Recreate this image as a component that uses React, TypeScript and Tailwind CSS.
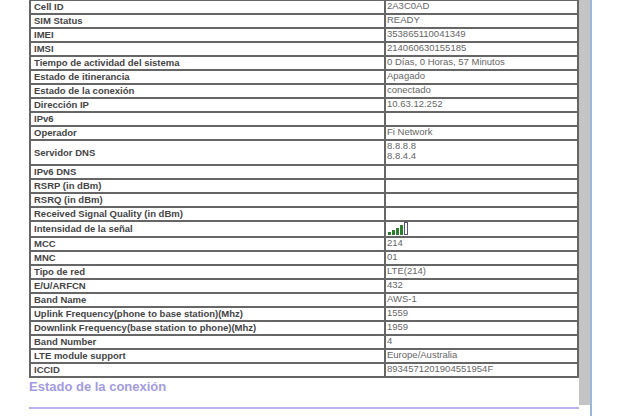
const rows: [string, string | string[], number?][] = [
  ["Cell ID", "2A3C0AD"],
  ["SIM Status", "READY"],
  ["IMEI", "353865110041349"],
  ["IMSI", "214060630155185"],
  ["Tiempo de actividad del sistema", "0 Días, 0 Horas, 57 Minutos"],
  ["Estado de itinerancia", "Apagado"],
  ["Estado de la conexión", "conectado"],
  ["Dirección IP", "10.63.12.252"],
  ["IPv6", ""],
  ["Operador", "Fi Network"],
  ["Servidor DNS", ["8.8.8.8", "8.8.4.4"]],
  ["IPv6 DNS", ""],
  ["RSRP (in dBm)", ""],
  ["RSRQ (in dBm)", ""],
  ["Received Signal Quality (in dBm)", ""],
  ["Intensidad de la señal", "SIGNAL"],
  ["MCC", "214"],
  ["MNC", "01"],
  ["Tipo de red", "LTE(214)"],
  ["E/U/ARFCN", "432"],
  ["Band Name", "AWS-1"],
  ["Uplink Frequency(phone to base station)(Mhz)", "1559"],
  ["Downlink Frequency(base station to phone)(Mhz)", "1959"],
  ["Band Number", "4"],
  ["LTE module support", "Europe/Australia"],
  ["ICCID", "8934571201904551954F"],
];

function Signal() {
  return (
    <svg width="22" height="13" viewBox="0 0 22 13" className="block">
      <rect x="1" y="10" width="3" height="3" fill="#2e7d32" />
      <rect x="5" y="8" width="3" height="5" fill="#2e7d32" />
      <rect x="9" y="6" width="3" height="7" fill="#2e7d32" />
      <rect x="13" y="3" width="3" height="10" fill="#2e7d32" />
      <rect x="17.5" y="0.5" width="3" height="12" fill="#fff" stroke="#557" />
    </svg>
  );
}

export default function App() {
  return (
    <div className="w-[624px] h-[416px] overflow-hidden bg-white flex" style={{ fontFamily: "'Liberation Sans', Arial, sans-serif" }}>
      <div className="w-[579px] pl-[29px] -mt-[1px]">
        <table className="w-[550px] border-collapse text-[9.5px]">
          <tbody>
            {rows.map(([k, v]) => (
              <tr key={k} className={Array.isArray(v) ? "h-[25px]" : v === "SIGNAL" ? "h-[16px]" : "h-[14px]"}>
                <td className="w-[355px] border-2 border-[#666] px-[3px] py-0 font-bold text-[#444] leading-[10px]">{k}</td>
                <td className="border-2 border-[#666] px-[1px] py-0 text-[#666] leading-[10px] align-top">
                  {Array.isArray(v) ? v.map((x) => <div key={x}>{x}</div>) : v === "SIGNAL" ? <Signal /> : v}
                </td>
              </tr>
            ))}
          </tbody>
        </table>
        <div className="text-[13px] font-bold text-[#a49be3] leading-[16px] mt-[1px]">Estado de la conexión</div>
        <div className="mt-[12px] h-[2px] bg-[#b8b2ea] w-[550px]" />
        <div className="mt-[7px] h-[2px] bg-[#555] w-[550px]" />
      </div>
      <div className="w-[11px] h-[405px] bg-[#c4c4c4]" />
      <div className="w-[2px] h-full bg-[#9cb8d8]" />
    </div>
  );
}
